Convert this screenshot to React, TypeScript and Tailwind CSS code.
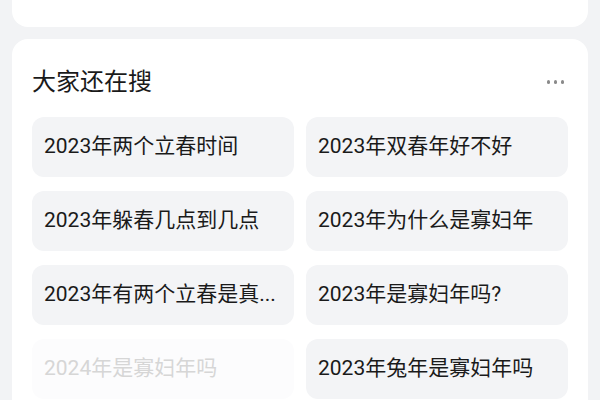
import React from "react";

const items = [
  "2023年两个立春时间",
  "2023年双春年好不好",
  "2023年躲春几点到几点",
  "2023年为什么是寡妇年",
  "2023年有两个立春是真...",
  "2023年是寡妇年吗?",
  "2024年是寡妇年吗",
  "2023年兔年是寡妇年吗",
];

export default function App() {
  return (
    <div
      className="w-[600px] h-[400px] overflow-hidden bg-[#f2f3f5] px-[12px]"
      style={{ fontFamily: "Roboto, 'Noto Sans CJK SC', sans-serif" }}
    >
      <div className="-mt-[40px] h-[67px] rounded-[16px] bg-white" />
      <div className="mt-[12px] rounded-[16px] bg-white px-[20px] pt-[26px] pb-[20px]">
        <div className="flex items-center justify-between h-[34px]">
          <div className="text-[24px] leading-[34px] text-[#1a1a1a]">大家还在搜</div>
          <div className="flex gap-[3.5px] pr-[4px]">
            <span className="block w-[3.5px] h-[3.5px] rounded-full bg-[#8a8a8a]" />
            <span className="block w-[3.5px] h-[3.5px] rounded-full bg-[#8a8a8a]" />
            <span className="block w-[3.5px] h-[3.5px] rounded-full bg-[#8a8a8a]" />
          </div>
        </div>
        <div className="mt-[18px] grid grid-cols-2 gap-x-[12px] gap-y-[14px]">
          {items.map((t, i) => (
            <div
              key={i}
              className={
                i === 6
                  ? "h-[60px] rounded-[12px] bg-[#fcfcfd] flex items-center px-[12px] text-[21px] text-[#d6d6d6]"
                  : "h-[60px] rounded-[12px] bg-[#f3f4f6] flex items-center px-[12px] text-[21px] text-[#1a1a1a]"
              }
            >
              <span className="block whitespace-nowrap">{t}</span>
            </div>
          ))}
        </div>
      </div>
    </div>
  );
}
